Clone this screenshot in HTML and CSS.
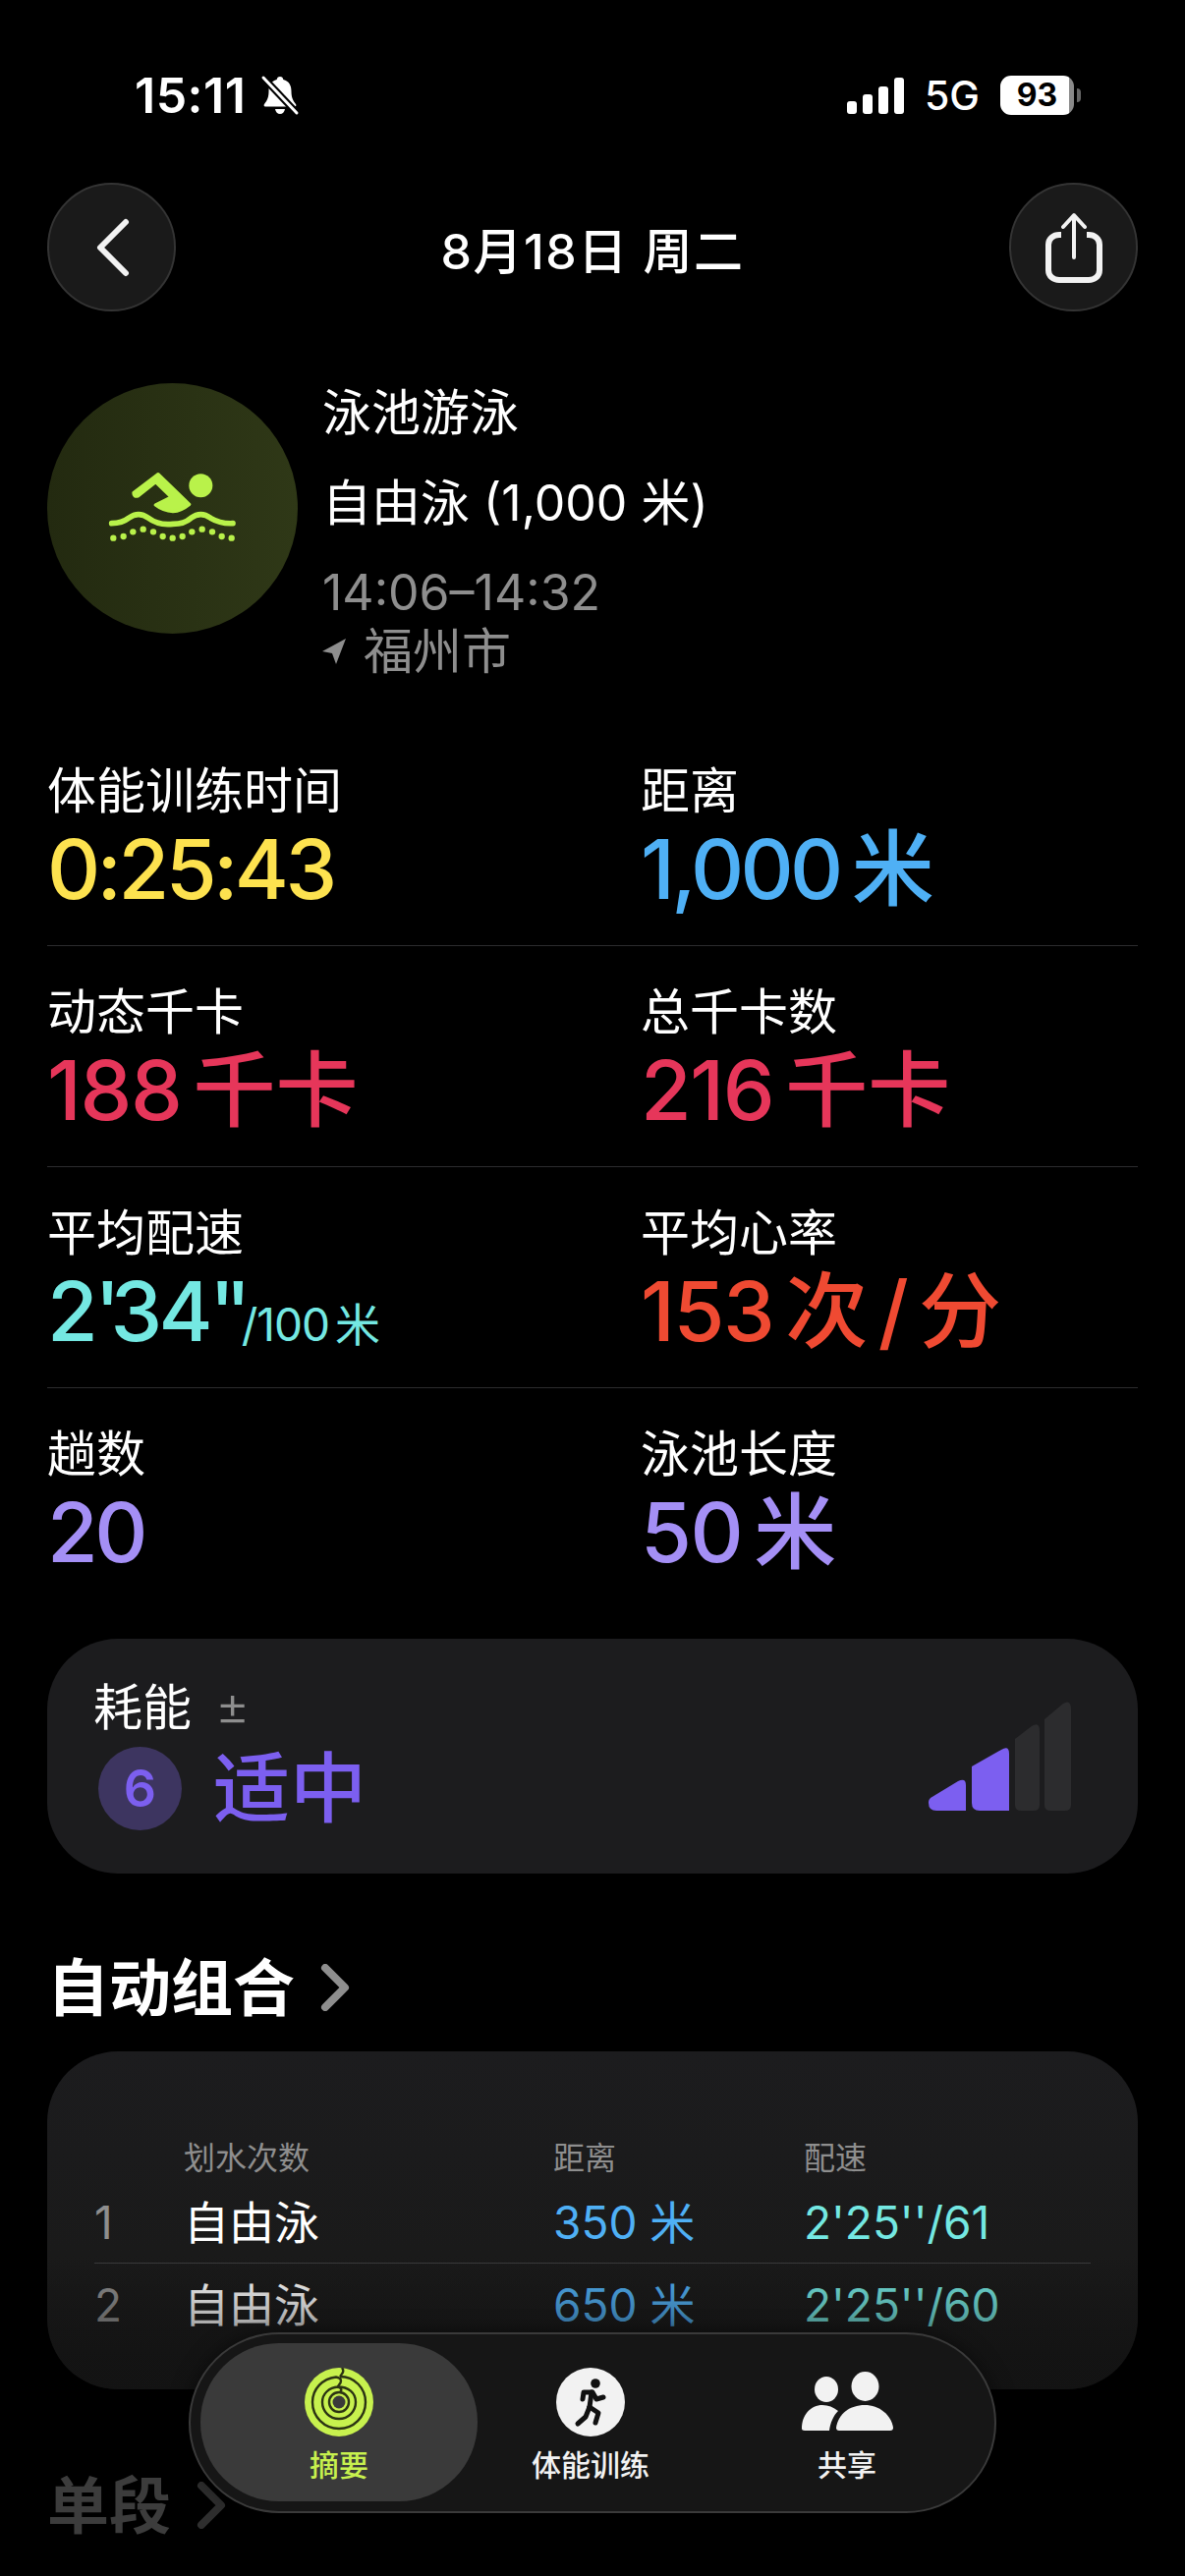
FILE: index.html
```html
<!DOCTYPE html>
<html lang="zh-CN">
<head>
    <meta charset="utf-8">
    <meta name="viewport" content="width=device-width, initial-scale=1">
    <title>体能训练详情</title>
    <link rel="stylesheet" href="styles.css">
</head>
<body>
    <div class="screen">
        <div class="status-bar">
            <div class="status-left">
                <span class="status-time">15:11</span>
                <svg class="bell" viewBox="0 0 40 44" width="40" height="44">
                    <path d="M20 3c-2 0-3 1.300-3.300 3C10.800 7.500 8.500 12 8.500 18c0 6-1.500 9-4.500 13-.8 1-.3 2.500 1 2.500h30c1.300 0 1.800-1.500 1-2.500-3-4-4.500-7-4.500-13 0-6-2.300-10.500-8.200-12C23 4 22 3 20 3zM15 36c.5 3 2.500 5 5 5s4.500-2 5-5z" fill="#fff"/>
                    <path d="M3 4l34 36" stroke="#000" stroke-width="7"/>
                    <path d="M3 4l34 36" stroke="#fff" stroke-width="3" stroke-linecap="round"/>
                </svg>
            </div>
            <div class="status-right">
                <svg viewBox="0 0 58 37" width="58" height="37">
                    <rect x="0" y="24" width="10" height="13" rx="3" fill="#fff"/>
                    <rect x="16" y="17" width="10" height="20" rx="3" fill="#fff"/>
                    <rect x="32" y="9" width="10" height="28" rx="3" fill="#fff"/>
                    <rect x="48" y="0" width="10" height="37" rx="3" fill="#fff"/>
                </svg>
                <span class="status-net">5G</span>
                <div class="battery">
                    <span class="battery-level">93</span>
                    <span class="battery-cap"></span>
                </div>
            </div>
        </div>

        <div class="nav">
            <div class="nav-btn">
                <svg viewBox="0 0 40 60" width="40" height="60">
                    <path d="M34 4L8 30l26 26" fill="none" stroke="#f2f2f2" stroke-width="6" stroke-linecap="round" stroke-linejoin="round"/>
                </svg>
            </div>
            <h1 class="nav-title">8月18日 周二</h1>
            <div class="nav-btn">
                <svg viewBox="0 0 60 74" width="60" height="74">
                    <path d="M17 24h-2C9 24 4 28 4 34v26c0 6 5 10 11 10h30c6 0 11-4 11-10V34c0-6-5-10-11-10h-2" fill="none" stroke="#f2f2f2" stroke-width="6"/>
                    <path d="M30 47V5M19 16L30 4l11 12" fill="none" stroke="#f2f2f2" stroke-width="4" stroke-linecap="round" stroke-linejoin="round"/>
                </svg>
            </div>
        </div>

        <div class="workout">
            <div class="workout-icon">
                <svg viewBox="0 0 450 270" width="150" height="90">
                    <path d="M105 95L180 38l95 92q-25 20-50 22-30-2-53-20l48-24-48-46-54 43q-13 3-13-10z" fill="#b9f24a" stroke="#b9f24a" stroke-width="10" stroke-linejoin="round"/>
                    <circle cx="310" cy="73" r="36" fill="#b9f24a"/>
                    <path d="M38 188q32 0 52-16 30-22 60 0 30 23 75 18 35 0 55-18 30-22 60 0 30 18 68 16" fill="none" stroke="#b9f24a" stroke-width="17" stroke-linecap="round" stroke-linejoin="round"/>
                    <g fill="#b9f24a">
                        <circle cx="43" cy="233" r="9.500"/>
                        <circle cx="74" cy="228" r="9.500"/>
                        <circle cx="103" cy="214" r="9.500"/>
                        <circle cx="134" cy="206" r="9.500"/>
                        <circle cx="165" cy="214" r="9.500"/>
                        <circle cx="194" cy="228" r="9.500"/>
                        <circle cx="224" cy="233" r="9.500"/>
                        <circle cx="254" cy="228" r="9.500"/>
                        <circle cx="283" cy="214" r="9.500"/>
                        <circle cx="314" cy="206" r="9.500"/>
                        <circle cx="345" cy="214" r="9.500"/>
                        <circle cx="374" cy="228" r="9.500"/>
                        <circle cx="404" cy="233" r="9.500"/>
                    </g>
                </svg>
            </div>
            <div class="workout-info">
                <div class="workout-line">泳池游泳</div>
                <div class="workout-line workout-type">自由泳 (1,000 米)</div>
                <div class="workout-line workout-time">14:06–14:32</div>
                <div class="workout-line workout-place">
                    <svg viewBox="0 0 24 26" width="24" height="26">
                        <path d="M24 0L0 13l10 2 4 11z" fill="#8e8e8e"/>
                    </svg>
                    <span>福州市</span>
                </div>
            </div>
        </div>

        <div class="stats">
            <div class="stat-row">
                <div>
                    <div class="stat-label">体能训练时间</div>
                    <div class="stat-value yellow">0:25:43</div>
                </div>
                <div>
                    <div class="stat-label">距离</div>
                    <div class="stat-value blue">1,000<span class="unit">米</span></div>
                </div>
            </div>
            <div class="stat-row">
                <div>
                    <div class="stat-label">动态千卡</div>
                    <div class="stat-value pink loose">188<span class="unit">千卡</span></div>
                </div>
                <div>
                    <div class="stat-label">总千卡数</div>
                    <div class="stat-value pink loose">216<span class="unit">千卡</span></div>
                </div>
            </div>
            <div class="stat-row">
                <div>
                    <div class="stat-label">平均配速</div>
                    <div class="stat-value teal">2<span class="ticks">'</span>34<span class="ticks">''</span><span class="per">/100 米</span></div>
                </div>
                <div>
                    <div class="stat-label">平均心率</div>
                    <div class="stat-value red loose">153<span class="unit">次 / 分</span></div>
                </div>
            </div>
            <div class="stat-row">
                <div>
                    <div class="stat-label">趟数</div>
                    <div class="stat-value purple">20</div>
                </div>
                <div>
                    <div class="stat-label">泳池长度</div>
                    <div class="stat-value purple loose">50<span class="unit">米</span></div>
                </div>
            </div>
        </div>

        <div class="effort-card">
            <div class="effort-left">
                <div class="effort-label">耗能<span class="effort-plus">±</span></div>
                <div class="effort-main">
                    <span class="effort-num">6</span>
                    <span class="effort-text">适中</span>
                </div>
            </div>
            <svg class="effort-bars" viewBox="0 0 145 111" width="145" height="111">
                <path d="M0 102q0-2 2-4l28-17q8-4 8 4v26H8q-8 0-8-8z" fill="#7c5ff0"/>
                <path d="M44 66l30-17q8-5 8 4v58H52q-8 0-8-8z" fill="#7c5ff0"/>
                <path d="M88 38l17-13q8-5 8 5v75q0 6-6 6H94q-6 0-6-6z" fill="#2c2c2e"/>
                <path d="M118 18l19-16q8-5 8 6v97q0 6-6 6h-15q-6 0-6-6z" fill="#2c2c2e"/>
            </svg>
        </div>

        <h2 class="section-title">自动组合
            <svg viewBox="0 0 30 48" width="30" height="48">
                <path d="M5 4l20 20L5 44" fill="none" stroke="#8e8e8e" stroke-width="8" stroke-linecap="round" stroke-linejoin="round"/>
            </svg>
        </h2>

        <div class="table-card">
            <div class="table-row table-head">
                <span></span>
                <span>划水次数</span>
                <span>距离</span>
                <span>配速</span>
            </div>
            <div class="table-row table-data table-line">
                <span class="row-num">1</span>
                <span>自由泳</span>
                <span class="blue">350 米</span>
                <span class="teal">2'25''/61</span>
            </div>
            <div class="table-row table-data table-second">
                <span class="row-num">2</span>
                <span>自由泳</span>
                <span class="blue">650 米</span>
                <span class="teal">2'25''/60</span>
            </div>
        </div>

        <h2 class="section-title section-dim">单段
            <svg viewBox="0 0 30 48" width="30" height="48">
                <path d="M5 4l20 20L5 44" fill="none" stroke="#2e2e2e" stroke-width="8" stroke-linecap="round" stroke-linejoin="round"/>
            </svg>
        </h2>

        <div class="tab-bar">
            <div class="tab tab-active">
                <svg viewBox="0 0 70 70" width="70" height="70">
                    <circle cx="35" cy="35" r="35" fill="#c7f14e"/>
                    <circle cx="35" cy="35" r="6.500" fill="#3a3a3a"/>
                    <g fill="none" stroke="#2b3313" stroke-width="2.400">
                        <path d="M38 0c3 4 0 6-2 9"/>
                        <path d="M36 9c15 0 26 12 26 26 0 15-12 27-27 27S8 50 8 35C8 22 18 11 32 9.500c3 .5 5 2 5 4 0 3-3 4-3 6"/>
                        <path d="M34 19.500c-9 .5-16 7-16 15.500 0 9.500 7.500 17 17 17s17-7.500 17-17-7.500-15.500-18-15.500"/>
                        <path d="M35 20c3 1 3 3 1 5"/>
                        <circle cx="35" cy="35" r="10"/>
                    </g>
                </svg>
                <span>摘要</span>
            </div>
            <div class="tab tab-middle">
                <div class="run-icon">
                    <svg viewBox="0 0 70 70" width="70" height="70">
                        <circle cx="40" cy="16" r="4.800" fill="#111"/>
                        <g fill="none" stroke="#111" stroke-width="5" stroke-linecap="round" stroke-linejoin="round">
                            <path d="M36 25l-2 15"/>
                            <path d="M36 25H28l-1 7"/>
                            <path d="M37 25l4 7 7-2"/>
                            <path d="M34 40l-4 10-8 7"/>
                            <path d="M34 40l9 6-3 10"/>
                        </g>
                    </svg>
                </div>
                <span>体能训练</span>
            </div>
            <div class="tab tab-last">
                <svg viewBox="0 0 93 70" width="93" height="70">
                    <ellipse cx="25" cy="22" rx="12" ry="13" fill="#f2f2f2"/>
                    <ellipse cx="64.500" cy="19" rx="14" ry="15" fill="#f2f2f2"/>
                    <path d="M0 62c0-14 9-24 21-24 6 0 11 2 16 6-5 5-8 12-9 20H3c-2 0-3-1-3-2z" fill="#f2f2f2"/>
                    <path d="M35 61c2-14 14-23 29-23s27 10 29 23c0 2-1 3-3 3H38c-2 0-3-1-3-3z" fill="#f2f2f2"/>
                </svg>
                <span>共享</span>
            </div>
        </div>
    </div>
</body>
</html>
```

FILE: styles.css
```css
* {
    box-sizing: border-box;
}
html, body {
    margin: 0;
    background: #000;
}
body {
    font-family: Inter, "Noto Sans CJK SC", sans-serif;
    color: #fff;
}
.screen {
    position: relative;
    width: 1206px;
    height: 2622px;
    padding-top: 60px;
    overflow: hidden;
}

/* status bar */
.status-bar {
    height: 74px;
    padding: 0 106px 0 137px;
    display: flex;
    align-items: center;
    justify-content: space-between;
}
.status-left {
    display: flex;
    align-items: center;
    gap: 15px;
}
.status-time {
    font-size: 50px;
    font-weight: 600;
    letter-spacing: 0.5px;
}
.status-right {
    display: flex;
    align-items: center;
    gap: 21px;
}
.status-net {
    font-size: 41px;
    font-weight: 500;
}
.battery {
    display: flex;
    align-items: center;
    gap: 3px;
}
.battery-level {
    width: 75px;
    height: 40px;
    background: linear-gradient(90deg, #fff 93%, #8a8a8a 93%);
    border-radius: 11px;
    color: #000;
    font-size: 32px;
    font-weight: 700;
    line-height: 40px;
    text-align: center;
}
.battery-cap {
    width: 4px;
    height: 14px;
    background: #666;
    border-radius: 0 4px 4px 0;
}

/* nav */
.nav {
    margin-top: 52px;
    padding: 0 48px;
    display: flex;
    align-items: center;
    justify-content: space-between;
}
.nav-btn {
    width: 131px;
    height: 131px;
    border-radius: 50%;
    background: #1a1a1a;
    border: 2px solid #343434;
    display: flex;
    align-items: center;
    justify-content: center;
}
.nav-title {
    margin: 0;
    font-size: 50px;
    font-weight: 500;
    letter-spacing: 1.500px;
}

/* workout summary */
.workout {
    margin-top: 73px;
    padding: 0 48px;
    display: flex;
    gap: 25px;
}
.workout-icon {
    width: 255px;
    height: 255px;
    padding-bottom: 5px;
    border-radius: 50%;
    background: linear-gradient(90deg, #232a10, #2f3817);
    display: flex;
    align-items: center;
    justify-content: center;
    flex-shrink: 0;
}
.workout-line {
    font-size: 50px;
    line-height: 60px;
}
.workout-type {
    margin-top: 32px;
}
.workout-time {
    margin-top: 31px;
    color: #8e8e8e;
}
.workout-place {
    display: flex;
    align-items: center;
    gap: 18px;
    color: #8e8e8e;
}

/* stats grid */
.stats {
    margin-top: 45px;
    padding: 0 48px;
}
.stat-row {
    display: grid;
    grid-template-columns: 604px 1fr;
    padding: 37px 0;
    border-top: 1px solid #2c2c2e;
}
.stat-row:first-child {
    border-top: none;
}
.stat-label {
    font-size: 50px;
    line-height: 60px;
}
.stat-value {
    height: 80px;
    margin-top: 10px;
    font-size: 84px;
    font-weight: 500;
    line-height: 80px;
    letter-spacing: -3.600px;
    white-space: nowrap;
}
.loose {
    letter-spacing: -1.400px;
}
.unit {
    margin-left: 12px;
    font-size: 84px;
    letter-spacing: 0;
    word-spacing: -12px;
}
.ticks {
    letter-spacing: -10px;
}
.per {
    font-size: 46px;
    font-weight: 400;
    letter-spacing: -1px;
    word-spacing: -6px;
}
.yellow { color: #fde24f; }
.blue { color: #4fb0f5; }
.pink { color: #e6365a; }
.teal { color: #74e8e2; }
.red { color: #ef4a32; }
.purple { color: #a48ff5; }

/* effort */
.effort-card {
    margin: 31px 48px 0;
    height: 239px;
    padding: 39px 68px 0 47px;
    border-radius: 72px;
    background: #1c1c1e;
    display: flex;
    justify-content: space-between;
    align-items: flex-start;
}
.effort-label {
    font-size: 50px;
    line-height: 60px;
}
.effort-plus {
    margin-left: 24px;
    font-size: 54px;
    font-weight: 300;
    color: #8e8e8e;
}
.effort-main {
    margin-top: 10px;
    margin-left: 5px;
    display: flex;
    align-items: center;
    gap: 32px;
}
.effort-num {
    width: 85px;
    height: 85px;
    border-radius: 50%;
    background: #3d3560;
    color: #7c5ff0;
    font-size: 52px;
    font-weight: 600;
    line-height: 85px;
    text-align: center;
}
.effort-text {
    font-size: 78px;
    font-weight: 500;
    line-height: 85px;
    color: #7c5ff0;
}
.effort-bars {
    margin-top: 25px;
}

/* section titles */
.section-title {
    margin: 81px 0 0 48px;
    display: flex;
    align-items: center;
    gap: 26px;
    font-size: 63px;
    font-weight: 700;
    line-height: 70px;
}
.section-dim {
    margin-top: 83px;
    color: #3c3c3c;
}

/* intervals table */
.table-card {
    position: relative;
    margin: 30px 48px 0;
    height: 344px;
    padding: 89px 48px 0;
    border-radius: 72px;
    background: linear-gradient(#1c1c1e 0%, #1a1a1a 60%, #131313 100%);
    overflow: hidden;
}
.table-card::after {
    content: "";
    position: absolute;
    left: 0;
    right: 0;
    top: 210px;
    bottom: 0;
    background: linear-gradient(rgba(19, 19, 19, 0), rgba(19, 19, 19, 0.7));
}
.table-row {
    display: grid;
    grid-template-columns: 91px 376px 255px 1fr;
}
.table-head {
    height: 40px;
    margin-bottom: 4px;
    font-size: 32px;
    line-height: 40px;
    color: #8e8e8e;
}
.table-data {
    font-size: 46px;
}
.table-line {
    height: 83px;
    border-bottom: 1px solid #3a3a3c;
    line-height: 82px;
}
.table-second {
    height: 84px;
    line-height: 84px;
}
.row-num {
    color: #8e8e8e;
}

/* bottom tab bar */
.tab-bar {
    position: absolute;
    left: 192px;
    top: 2374px;
    width: 822px;
    height: 184px;
    padding: 9px 4px 10px 10px;
    border: 2px solid #3a3a3a;
    border-radius: 92px;
    background: #161616;
    box-shadow: 0 0 20px rgba(0, 0, 0, 0.5);
    display: flex;
}
.tab {
    padding-top: 25px;
    display: flex;
    flex-direction: column;
    align-items: center;
    gap: 10px;
    font-size: 30px;
    font-weight: 500;
    line-height: 38px;
    color: #f2f2f2;
}
.tab-active {
    width: 282px;
    border-radius: 80px;
    background: #3a3a3a;
    color: #c7f14e;
}
.tab-middle {
    width: 230px;
}
.tab-last {
    width: 292px;
}
.run-icon {
    width: 70px;
    height: 70px;
    border-radius: 50%;
    background: #f2f2f2;
}
.run-icon svg {
    display: block;
}
```
